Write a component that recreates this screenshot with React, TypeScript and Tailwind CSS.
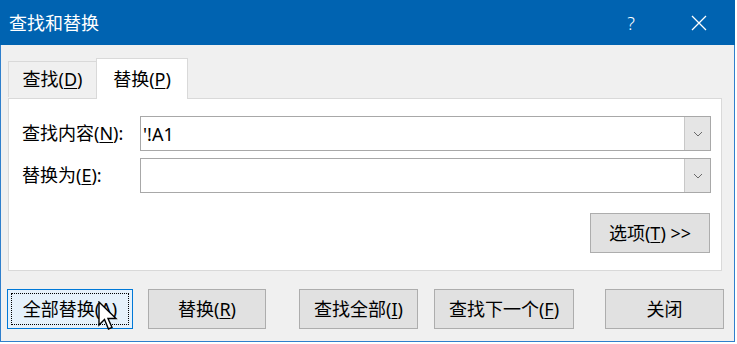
import React from 'react';

const font = "font-['Noto_Sans','Noto_Sans_CJK_SC',sans-serif]";

function Mn({ children }: { children: React.ReactNode }) {
  return <span className="underline underline-offset-2 decoration-1">{children}</span>;
}

function Combo({ value }: { value?: string }) {
  return (
    <div className="flex-1 h-[35px] flex border border-[#a8a8a8] bg-white">
      <div className="flex-1 flex items-center pl-[2px] text-[18px] text-black leading-none">{value}</div>
      <div className="w-[26px] flex items-center justify-center bg-[#e5e5e5] border-l border-[#c8c8c8]">
        <svg width="10" height="6" viewBox="0 0 10 6">
          <path d="M1 1 L5 5 L9 1" fill="none" stroke="#6a6a6a" strokeWidth="1" />
        </svg>
      </div>
    </div>
  );
}

function Btn({ children, className = '' }: { children: React.ReactNode; className?: string }) {
  return (
    <div
      className={`h-[40px] flex items-center justify-center bg-[#e1e1e1] border border-[#adadad] text-[18px] text-black ${className}`}
    >
      {children}
    </div>
  );
}

function Cursor() {
  return (
    <svg className="absolute left-[98px] top-[301px]" width="21" height="31" viewBox="0 0 21 31">
      <path
        d="M1 1 L1 24 L6.5 18.5 L10.5 28 L14 26.5 L10 17.5 L18 17.5 Z"
        fill="white"
        stroke="black"
        strokeWidth="1.4"
        strokeLinejoin="miter"
      />
    </svg>
  );
}

export default function App() {
  return (
    <div className={`relative w-[737px] h-[344px] bg-white ${font}`}>
      <div className="w-[735px] h-[342px] flex flex-col bg-[#f0f0f0] border-x border-b border-[#2f7fcc]">
        {/* title bar */}
        <div className="h-[45px] -mx-px flex items-center bg-[#0063b1] text-white shrink-0">
          <span className="pl-[9px] text-[18px] leading-none">查找和替换</span>
          <span className="ml-auto text-[18px] leading-none font-light">?</span>
          <svg className="ml-[56px] mr-[28px]" width="16" height="16" viewBox="0 0 16 16">
            <path d="M1 1 L15 15 M15 1 L1 15" stroke="white" strokeWidth="1.3" />
          </svg>
        </div>

        {/* tabs */}
        <div className="mt-[12px] pl-[7px] h-[41px] flex items-end shrink-0">
          <div className="w-[88px] h-[36px] mb-px flex items-center justify-center border-t border-l border-[#d9d9d9] text-[18px] text-black">
            查找(<Mn>D</Mn>)
          </div>
          <div className="relative z-10 w-[92px] h-[41px] -mb-px flex items-center justify-center bg-white border-x border-t border-[#d9d9d9] text-[18px] text-black">
            替换(<Mn>P</Mn>)
          </div>
        </div>

        {/* panel */}
        <div className="ml-[7px] w-[714px] h-[173px] flex flex-col bg-white border border-[#d9d9d9] pl-[13px] pr-[10px] pt-[17px] shrink-0">
          <div className="flex items-center">
            <div className="w-[118px] text-[18px] text-black">
              查找内容(<Mn>N</Mn>):
            </div>
            <Combo value="'!A1" />
          </div>
          <div className="flex items-center mt-[7px]">
            <div className="w-[118px] text-[18px] text-black">
              替换为(<Mn>E</Mn>):
            </div>
            <Combo />
          </div>
          <div className="flex justify-end mt-[20px] pr-px">
            <Btn className="w-[120px]">
              选项(<Mn>T</Mn>) &gt;&gt;
            </Btn>
          </div>
        </div>

        {/* buttons */}
        <div className="flex mt-[18px] pl-[6px]">
          <div className="w-[126px] h-[40px] p-[3px] bg-[#e5f1fb] border border-[#0078d7]">
            <div className="w-full h-full flex items-center justify-center border border-dotted border-black text-[18px] text-black">
              全部替换(<Mn>A</Mn>)
            </div>
          </div>
          <Btn className="w-[118px] ml-[15px]">
            替换(<Mn>R</Mn>)
          </Btn>
          <Btn className="w-[119px] ml-[33px]">
            查找全部(<Mn>I</Mn>)
          </Btn>
          <Btn className="w-[140px] ml-[16px]">
            查找下一个(<Mn>F</Mn>)
          </Btn>
          <Btn className="w-[119px] ml-[31px]">关闭</Btn>
        </div>
      </div>
      <Cursor />
    </div>
  );
}
